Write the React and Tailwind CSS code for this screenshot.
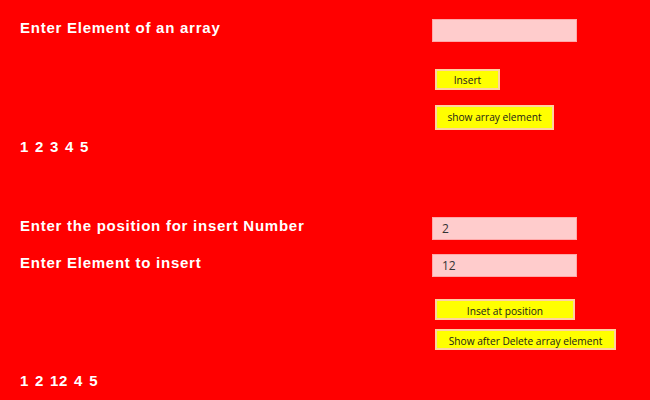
const label =
  "text-white font-bold text-[15px] leading-[15px] tracking-[0.75px] font-['Liberation_Sans',Arial,sans-serif]";
const btn =
  "h-[21px] bg-[#ffff00] border-2 border-[#ffd2a0] text-[#1a1a1a] text-[10.2px] font-medium font-['Open_Sans',sans-serif] flex justify-center overflow-hidden whitespace-nowrap";

function Field({ value }) {
  return (
    <div className="w-[145px] h-[23px] bg-[#ffcccc] border border-[#ffa8a8] pl-[9px] flex items-center text-[12px] text-[#333] font-['Open_Sans',sans-serif]">
      {value}
    </div>
  );
}

export default function App() {
  return (
    <div className="w-[650px] h-[400px] bg-[#ff0000] overflow-hidden">
      {/* first array */}
      <div className="flex pt-[19px] h-[42px]">
        <div className="w-[432px] pl-5 pt-[1px]">
          <p className={label}>Enter Element of an array</p>
        </div>
        <Field value="" />
      </div>

      <div className="pl-[435px] mt-[27px]">
        <div className={`${btn} w-[65px] items-center pt-[2px]`}>Insert</div>
      </div>
      <div className="pl-[435px] mt-[15px]">
        <div className={`${btn} w-[119px] h-[25px] items-center`}>show array element</div>
      </div>

      <p className={`${label} pl-5 mt-[9px] [word-spacing:1px]`}>1 2 3 4 5</p>

      {/* insert at position */}
      <div className="flex mt-[63px] h-[23px]">
        <div className="w-[432px] pl-5 pt-[1px]">
          <p className={label}>Enter the position for insert Number</p>
        </div>
        <Field value="2" />
      </div>
      <div className="flex mt-[14px] h-[23px]">
        <div className="w-[432px] pl-5 pt-[1px]">
          <p className={label}>Enter Element to insert</p>
        </div>
        <Field value="12" />
      </div>

      <div className="pl-[435px] mt-[22px]">
        <div className={`${btn} w-[140px] items-start pt-[3px] leading-[15px]`}>Inset at position</div>
      </div>
      <div className="pl-[435px] mt-[9px]">
        <div className={`${btn} w-[181px] items-start pt-[3px] leading-[15px]`}>Show after Delete array element</div>
      </div>

      <p className={`${label} pl-5 mt-[23px] [word-spacing:1px]`}>1 2 12 4 5</p>
    </div>
  );
}
